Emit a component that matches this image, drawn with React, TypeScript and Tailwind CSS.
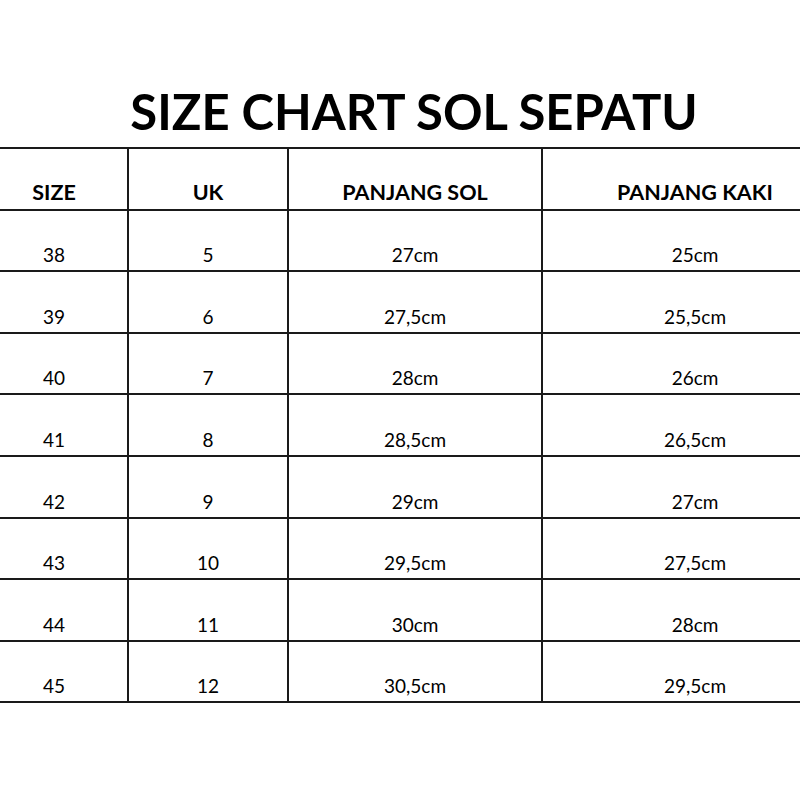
import React from 'react';

const rows = [
  ['38', '5', '27cm', '25cm'],
  ['39', '6', '27,5cm', '25,5cm'],
  ['40', '7', '28cm', '26cm'],
  ['41', '8', '28,5cm', '26,5cm'],
  ['42', '9', '29cm', '27cm'],
  ['43', '10', '29,5cm', '27,5cm'],
  ['44', '11', '30cm', '28cm'],
  ['45', '12', '30,5cm', '29,5cm'],
];

const headers = ['SIZE', 'UK', 'PANJANG SOL', 'PANJANG KAKI'];

export default function App() {
  return (
    <div
      className="w-[800px] h-[800px] overflow-hidden bg-white text-black"
      style={{ fontFamily: 'Lato, "Open Sans", sans-serif' }}
    >
      <div className="ml-[-19px] w-[866px]">
        <h1 className="pt-[87px] mb-[12px] text-center text-[49px] leading-[48px] font-bold">
          SIZE CHART SOL SEPATU
        </h1>

        <div className="border-t-2 border-[#1a1a1a]">
          {/* header */}
          <div className="grid grid-cols-[148px_160px_254px_304px] h-[61.6px] border-b-2 border-[#1a1a1a]">
            {headers.map((h, i) => (
              <div
                key={h}
                className={`flex items-end justify-center pb-[5px] text-[21.5px] leading-none font-bold ${
                  i < 3 ? 'border-r-2 border-[#1a1a1a]' : ''
                }`}
              >
                {h}
              </div>
            ))}
          </div>

          {/* rows */}
          {rows.map((r) => (
            <div
              key={r[0]}
              className="grid grid-cols-[148px_160px_254px_304px] h-[61.6px] border-b-2 border-[#1a1a1a]"
            >
              {r.map((c, i) => (
                <div
                  key={i}
                  className={`flex items-end justify-center pb-[6px] text-[19px] leading-none ${
                    i < 3 ? 'border-r-2 border-[#1a1a1a]' : ''
                  }`}
                >
                  {c}
                </div>
              ))}
            </div>
          ))}
        </div>
      </div>
    </div>
  );
}
